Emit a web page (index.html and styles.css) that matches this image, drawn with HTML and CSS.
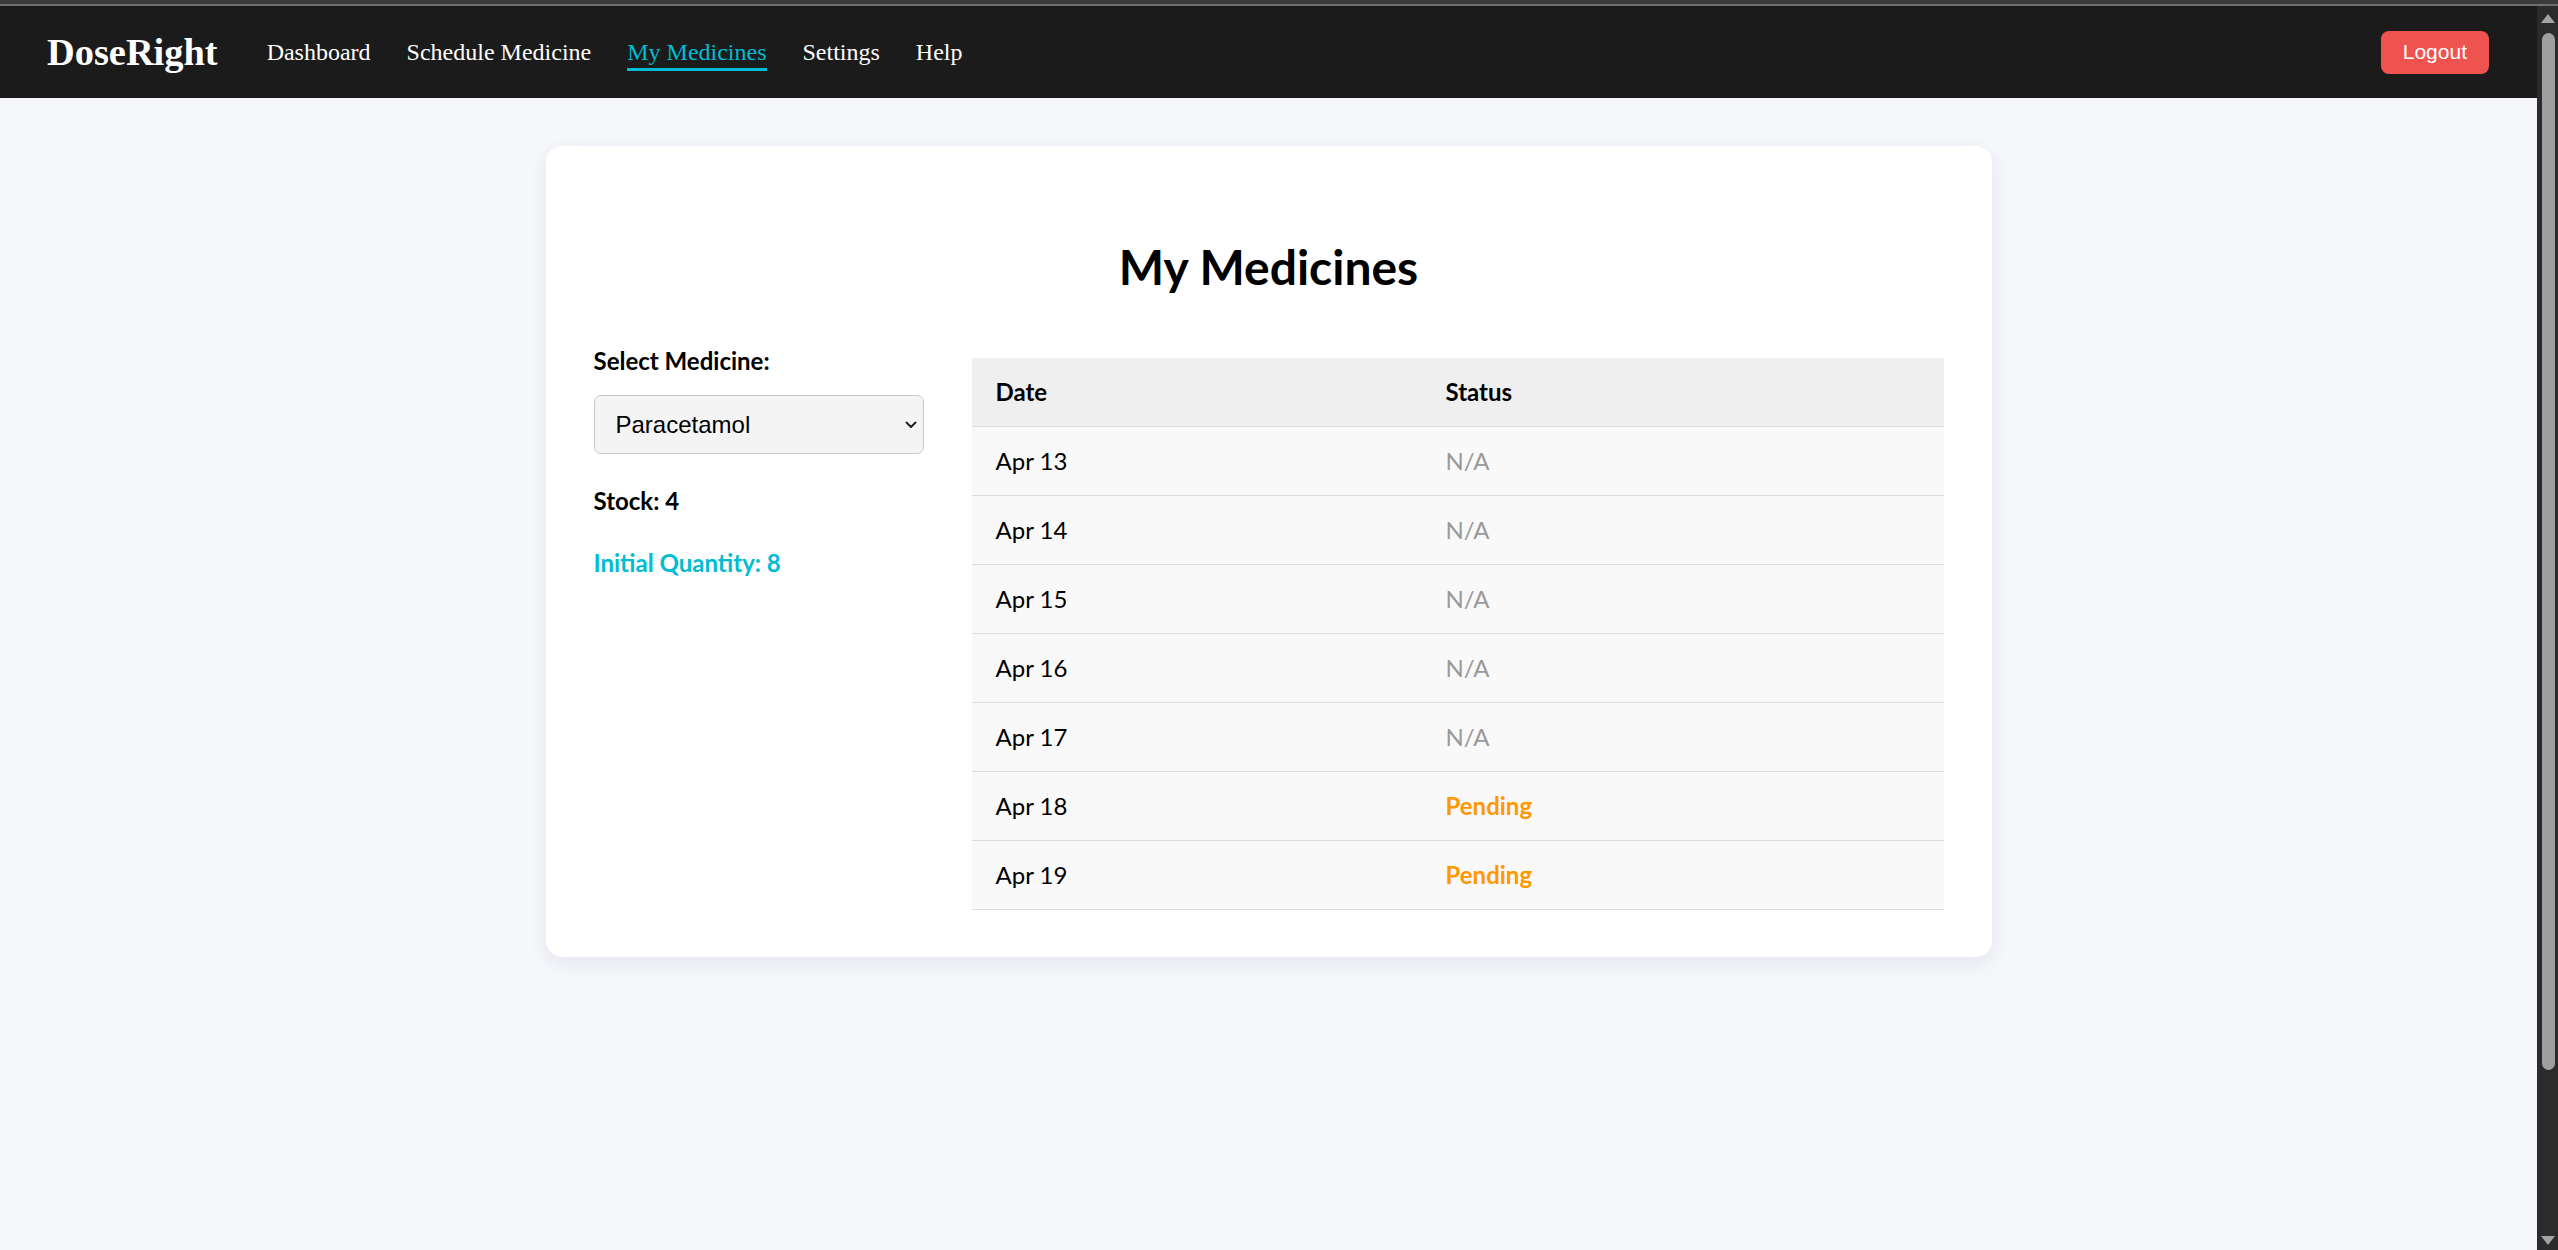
FILE: index.html
```html
<!DOCTYPE html>
<html lang="en">
<head>
<meta charset="utf-8">
<title>DoseRight - My Medicines</title>
<link rel="stylesheet" href="styles.css">
</head>
<body>
<div class="chrome-top"></div>
<div class="window">
  <div class="page">
    <nav class="navbar">
      <div class="logo">DoseRight</div>
      <div class="nav-links">
        <a class="nav-link" href="#">Dashboard</a>
        <a class="nav-link" href="#">Schedule Medicine</a>
        <a class="nav-link active" href="#">My Medicines</a>
        <a class="nav-link" href="#">Settings</a>
        <a class="nav-link" href="#">Help</a>
      </div>
      <button class="logout">Logout</button>
    </nav>
    <main class="main">
      <section class="card">
        <h1 class="title">My Medicines</h1>
        <div class="content">
          <div class="side">
            <label class="field-label" for="med">Select Medicine:</label>
            <div class="select-wrap">
              <select id="med" class="select"><option>Paracetamol</option></select>
              <svg class="chev" width="12" height="8" viewBox="0 0 12 8"><path d="M1.5 1.5 L6 6 L10.5 1.5" fill="none" stroke="#222" stroke-width="2" stroke-linecap="round" stroke-linejoin="round"/></svg>
            </div>
            <p class="stock">Stock: <strong>4</strong></p>
            <p class="initial">Initial Quantity: 8</p>
          </div>
          <table class="history">
            <colgroup><col class="col-date"><col></colgroup>
            <thead><tr><th>Date</th><th>Status</th></tr></thead>
            <tbody>
              <tr><td>Apr 13</td><td class="na">N/A</td></tr>
              <tr><td>Apr 14</td><td class="na">N/A</td></tr>
              <tr><td>Apr 15</td><td class="na">N/A</td></tr>
              <tr><td>Apr 16</td><td class="na">N/A</td></tr>
              <tr><td>Apr 17</td><td class="na">N/A</td></tr>
              <tr><td>Apr 18</td><td class="pending">Pending</td></tr>
              <tr><td>Apr 19</td><td class="pending">Pending</td></tr>
            </tbody>
          </table>
        </div>
      </section>
    </main>
  </div>
  <div class="scrollbar">
    <div class="sb-btn sb-up"><span class="tri-up"></span></div>
    <div class="sb-track"><div class="sb-thumb"></div></div>
    <div class="sb-btn sb-down"><span class="tri-down"></span></div>
  </div>
</div>
</body>
</html>
```

FILE: styles.css
```css
* { box-sizing: border-box; }
html, body { margin: 0; height: 100%; }
body {
  display: flex;
  flex-direction: column;
  overflow: hidden;
  background: #1b1b1b;
  font-family: Lato, "Open Sans", sans-serif;
  color: #111;
}
.chrome-top { flex: none; height: 6px; background: #3b3b3b; border-bottom: 2px solid #6e6e6e; }
.window { flex: 1; display: flex; min-height: 0; }
.page { flex: 1; min-width: 0; background: #f5f7fb; }

.navbar {
  height: 92px;
  background: #1b1b1b;
  display: flex;
  align-items: center;
  padding: 0 48px 0 47px;
}
.logo {
  font-family: "Liberation Serif", serif;
  font-weight: 700;
  font-size: 38.4px;
  color: #fff;
  margin-right: 49px;
}
.nav-links { display: flex; gap: 36px; }
.nav-link {
  position: relative;
  font-family: "Liberation Serif", serif;
  font-size: 24px;
  color: #fff;
  text-decoration: none;
}
.nav-link.active { color: #00bcd4; }
.nav-link.active::after {
  content: "";
  position: absolute;
  left: 0; right: 0; bottom: -5.5px;
  height: 3px;
  background: #00bcd4;
}
.logout {
  margin-left: auto;
  height: 43px;
  padding: 0 22px;
  border: none;
  border-radius: 8px;
  background: #ef5350;
  color: #fff;
  font-family: "Liberation Sans", Arial, sans-serif;
  font-size: 21px;
}

.main { padding-top: 48px; }
.card {
  width: 1446px;
  margin: 0 auto;
  padding: 48px 48px 47px;
  background: #fff;
  border-radius: 16px;
  box-shadow: 0 6px 20px rgba(20, 30, 60, 0.08);
}
.title {
  margin: 41px 0 46px;
  font-size: 48px;
  line-height: 64px;
  font-weight: 700;
  text-align: center;
  color: #000;
}
.content {
  display: grid;
  grid-template-columns: 330px 1fr;
  gap: 48px;
  align-items: start;
  font-size: 24px;
  line-height: 32px;
}
.field-label { display: block; font-weight: 700; margin-bottom: 18px; color: #000; }
.select-wrap { position: relative; width: 330px; height: 59px; }
.select {
  width: 100%;
  height: 59px;
  appearance: none;
  -webkit-appearance: none;
  background: #f4f4f4;
  border: 1.5px solid #c8c8c8;
  border-radius: 7px;
  padding: 0 21px;
  font-family: "Liberation Sans", Arial, sans-serif;
  font-size: 24px;
  color: #000;
}
.chev { position: absolute; right: 7px; top: 26px; }
.stock { margin: 31px 0 0; font-weight: 700; color: #000; }
.stock strong { font-weight: 700; }
.initial { margin: 30px 0 0; font-weight: 700; color: #00bcd4; }

.history { width: 100%; margin-top: 13px; border-collapse: collapse; }
.col-date { width: 450px; }
.history th, .history td {
  padding: 18px 24px;
  text-align: left;
  border-bottom: 1px solid #dddddd;
}
.history th { background: #efefef; font-weight: 700; color: #000; }
.history td { background: #f9f9f9; color: #000; }
.history td.na { color: #999; }
.history td.pending { color: #ff9800; font-weight: 700; }

.scrollbar { flex: none; width: 21px; background: #2b2b2b; display: flex; flex-direction: column; }
.sb-btn { flex: none; height: 24px; display: flex; justify-content: center; }
.sb-up { align-items: center; }
.sb-down { align-items: flex-end; padding-bottom: 5px; }
.tri-up { width: 0; height: 0; border-left: 7.5px solid transparent; border-right: 7.5px solid transparent; border-bottom: 9px solid #a3a3a3; }
.tri-down { width: 0; height: 0; border-left: 7.5px solid transparent; border-right: 7.5px solid transparent; border-top: 9px solid #a3a3a3; }
.sb-track { flex: 1; padding: 3px 0 0 5px; }
.sb-thumb { width: 13px; height: 1037px; border-radius: 7px; background: #9f9f9f; }
```
